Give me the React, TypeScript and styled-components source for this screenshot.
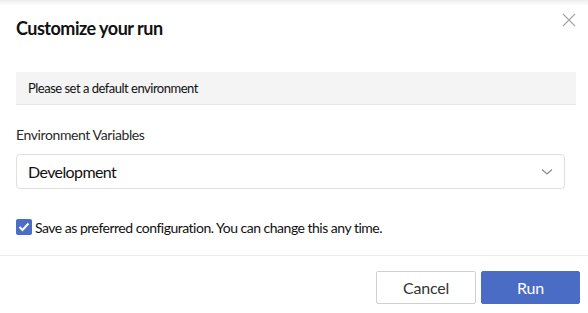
import React from "react";
import styled, { createGlobalStyle } from "styled-components";

const Global = createGlobalStyle`
  html, body { margin: 0; padding: 0; background: #ffffff; }
  body { font-family: Lato, "Open Sans", Arial, sans-serif; color: #222; }
  * { box-sizing: border-box; }
`;

const Modal = styled.div`
  width: 588px;
  height: 313px;
  background: #fff;
  position: relative;
  overflow: hidden;
  &::before {
    content: "";
    position: absolute;
    left: 0;
    right: 0;
    top: 0;
    height: 6px;
    background: linear-gradient(to bottom, rgba(0,0,0,0.07), rgba(0,0,0,0));
  }
`;

const Header = styled.div`
  display: flex;
  align-items: flex-start;
  justify-content: space-between;
  padding: 17px 12px 0 16px;
  height: 72px;
`;

const Title = styled.h1`
  margin: 0;
  font-size: 18px;
  line-height: 22px;
  font-weight: 700;
  color: #111;
  letter-spacing: -0.5px;
`;

const Close = styled.button`
  border: none;
  background: none;
  padding: 0;
  width: 14px;
  height: 14px;
  margin-top: -4px;
  cursor: pointer;
  display: flex;
`;

const Body = styled.div`
  padding: 0 12px 0 16px;
`;

const Notice = styled.div`
  background: #f4f4f4;
  border-bottom: 1px solid #e6e6e6;
  height: 33px;
  display: flex;
  align-items: center;
  padding: 0 12px;
  font-size: 13px;
  color: #111;
  letter-spacing: -0.5px;
`;

const Label = styled.div`
  margin-top: 21px;
  font-size: 14px;
  line-height: 18px;
  color: #2a2a2a;
  letter-spacing: -0.4px;
`;

const Select = styled.div`
  margin-top: 10px;
  width: 549px;
  height: 35px;
  border: 1px solid #e0e0e0;
  border-radius: 4px;
  display: flex;
  align-items: center;
  justify-content: space-between;
  padding: 0 11px;
  font-size: 16px;
  color: #111;
  letter-spacing: -0.6px;
`;

const CheckRow = styled.label`
  display: flex;
  align-items: center;
  gap: 3px;
  margin-top: 30px;
  font-size: 14px;
  color: #111;
  height: 16px;
  letter-spacing: -0.5px;
`;

const Box = styled.span`
  width: 16px;
  height: 16px;
  background: #4a6ec8;
  border-radius: 2px;
  display: flex;
  align-items: center;
  justify-content: center;
`;

const Divider = styled.div`
  height: 1px;
  background: #ececec;
  margin-top: 20px;
`;

const Footer = styled.div`
  display: flex;
  justify-content: flex-end;
  gap: 5px;
  padding: 15px 8px 0 0;
`;

const Button = styled.button<{ $primary?: boolean }>`
  width: ${(p) => (p.$primary ? "99px" : "100px")};
  height: 33px;
  border-radius: 2px;
  font-family: Lato, "Open Sans", Arial, sans-serif;
  font-size: 16px;
  letter-spacing: -0.2px;
  cursor: pointer;
  border: 1px solid ${(p) => (p.$primary ? "#4a6cc4" : "#d0d0d0")};
  background: ${(p) => (p.$primary ? "#4a6cc4" : "#ffffff")};
  color: ${(p) => (p.$primary ? "#ffffff" : "#333333")};
`;

export default function App() {
  return (
    <>
      <Global />
      <Modal>
        <Header>
          <Title>Customize your run</Title>
          <Close aria-label="Close">
            <svg width="14" height="14" viewBox="0 0 14 14">
              <path d="M1 1L13 13M13 1L1 13" stroke="#a8a8a8" strokeWidth="1.2" />
            </svg>
          </Close>
        </Header>
        <Body>
          <Notice>Please set a default environment</Notice>
          <Label>Environment Variables</Label>
          <Select>
            <span>Development</span>
            <svg width="12" height="8" viewBox="0 0 12 8">
              <path d="M1 1.5L6 6L11 1.5" stroke="#8a8a8a" strokeWidth="1.1" fill="none" />
            </svg>
          </Select>
          <CheckRow>
            <Box>
              <svg width="12" height="10" viewBox="0 0 12 10">
                <path d="M1.5 5L4.5 8L10.5 1.5" stroke="#fff" strokeWidth="2" fill="none" />
              </svg>
            </Box>
            Save as preferred configuration. You can change this any time.
          </CheckRow>
        </Body>
        <Divider />
        <Footer>
          <Button>Cancel</Button>
          <Button $primary>Run</Button>
        </Footer>
      </Modal>
    </>
  );
}
